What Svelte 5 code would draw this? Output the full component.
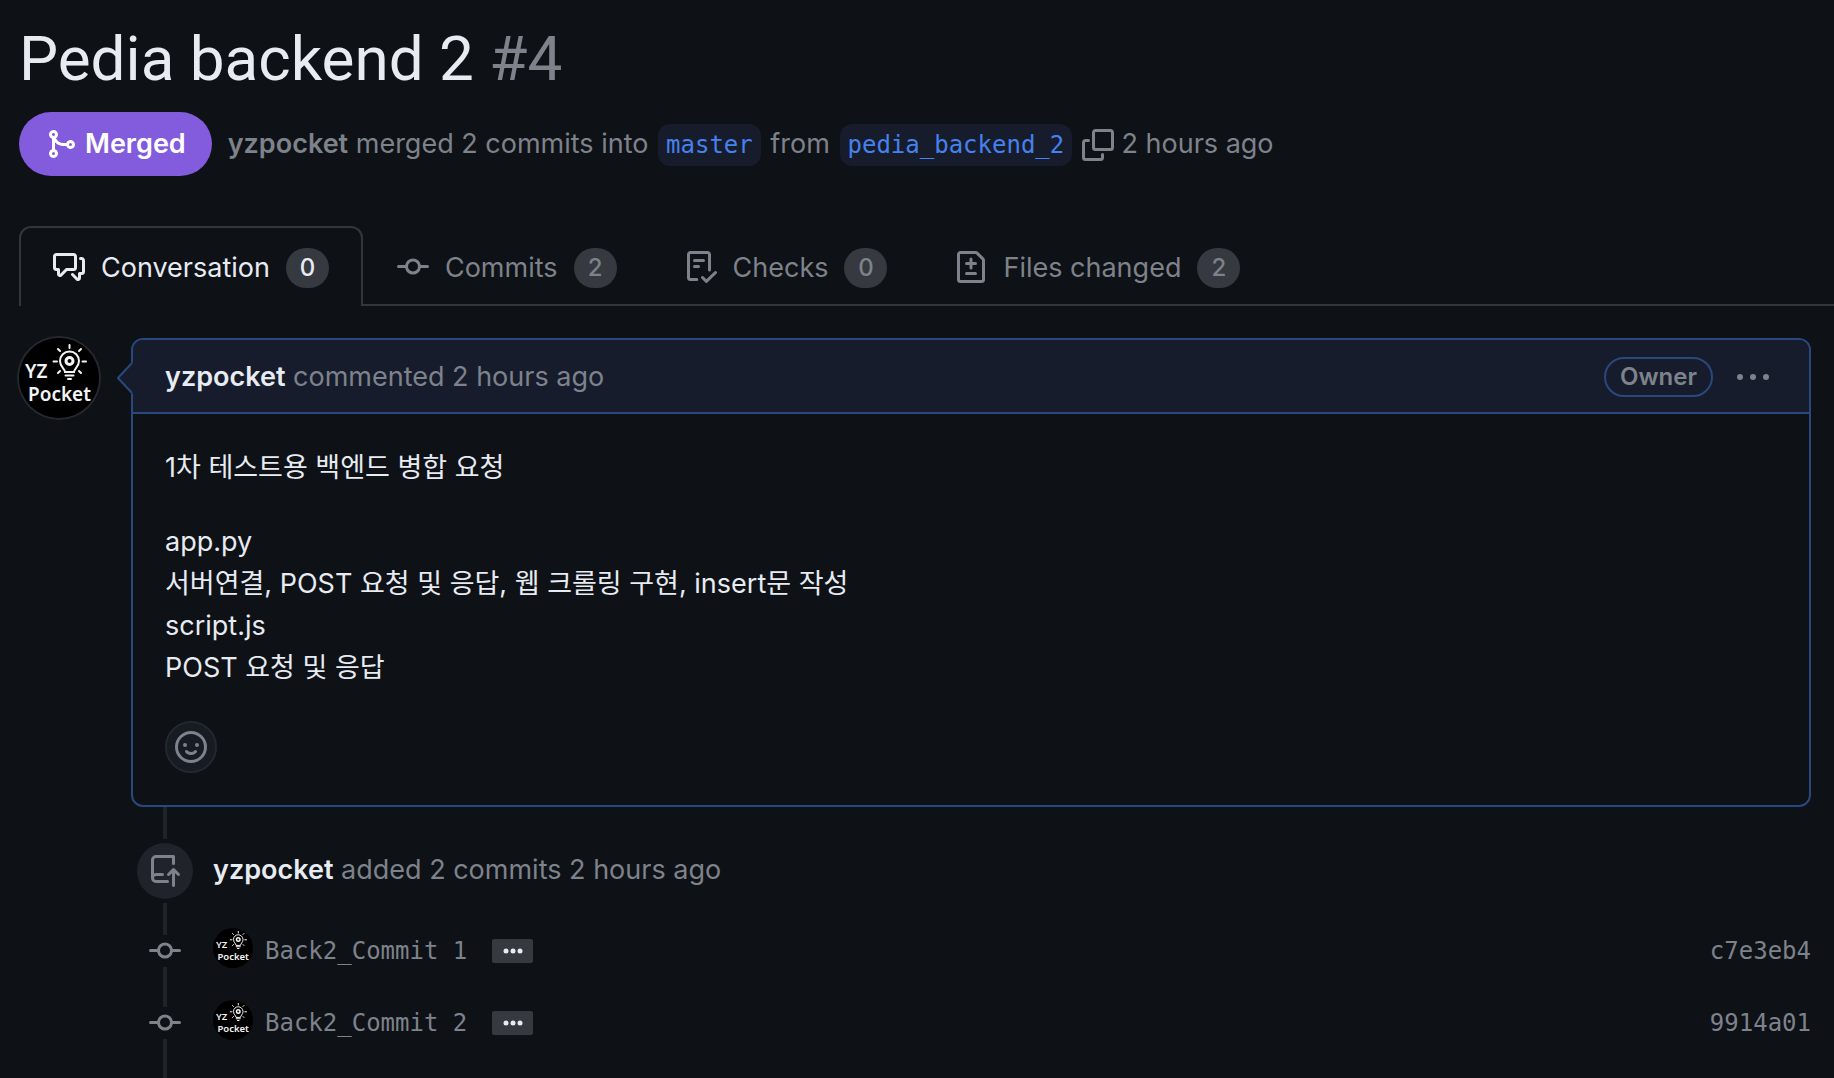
<script lang="ts">
	const icons = {
		merge:
			'M5.45 5.154A4.25 4.25 0 0 0 9.25 7.5h1.378a2.251 2.251 0 1 1 0 1.5H9.25A5.734 5.734 0 0 1 5 7.123v3.505a2.25 2.25 0 1 1-1.5 0V5.372a2.25 2.25 0 1 1 1.95-.218ZM4.25 13.5a.75.75 0 1 0 0-1.5.75.75 0 0 0 0 1.5Zm8.5-4.5a.75.75 0 1 0 0-1.5.75.75 0 0 0 0 1.5ZM5 3.25a.75.75 0 1 0 0 .005V3.25Z',
		copy: 'M0 6.75C0 5.784.784 5 1.75 5h1.5a.75.75 0 0 1 0 1.5h-1.5a.25.25 0 0 0-.25.25v7.5c0 .138.112.25.25.25h7.5a.25.25 0 0 0 .25-.25v-1.5a.75.75 0 0 1 1.5 0v1.5A1.75 1.75 0 0 1 9.25 16h-7.5A1.75 1.75 0 0 1 0 14.25Z M5 1.75C5 .784 5.784 0 6.75 0h7.5C15.216 0 16 .784 16 1.75v7.5A1.75 1.75 0 0 1 14.25 11h-7.5A1.75 1.75 0 0 1 5 9.25Zm1.75-.25a.25.25 0 0 0-.25.25v7.5c0 .138.112.25.25.25h7.5a.25.25 0 0 0 .25-.25v-7.5a.25.25 0 0 0-.25-.25Z',
		discussion:
			'M1.75 1h8.5c.966 0 1.75.784 1.75 1.75v5.5A1.75 1.75 0 0 1 10.25 10H7.061l-2.574 2.573A1.458 1.458 0 0 1 2 11.543V10h-.25A1.75 1.75 0 0 1 0 8.25v-5.5C0 1.784.784 1 1.75 1ZM1.5 2.75v5.5c0 .138.112.25.25.25h1a.75.75 0 0 1 .75.75v2.19l2.72-2.72a.749.749 0 0 1 .53-.22h3.5a.25.25 0 0 0 .25-.25v-5.5a.25.25 0 0 0-.25-.25h-8.5a.25.25 0 0 0-.25.25Zm13 2a.25.25 0 0 0-.25-.25h-.5a.75.75 0 0 1 0-1.5h.5c.966 0 1.75.784 1.75 1.75v5.5A1.75 1.75 0 0 1 14.25 12H14v1.543a1.458 1.458 0 0 1-2.487 1.03L9.22 12.28a.749.749 0 0 1 .326-1.275.749.749 0 0 1 .734.215l2.22 2.22v-2.19a.75.75 0 0 1 .75-.75h1a.25.25 0 0 0 .25-.25Z',
		commit:
			'M11.93 8.5a4.002 4.002 0 0 1-7.86 0H.75a.75.75 0 0 1 0-1.5h3.32a4.002 4.002 0 0 1 7.86 0h3.32a.75.75 0 0 1 0 1.5Zm-1.43-.75a2.5 2.5 0 1 0-5 0 2.5 2.5 0 0 0 5 0Z',
		checklist:
			'M2.5 1.75v11.5c0 .138.112.25.25.25h3.17a.75.75 0 0 1 0 1.5H2.75A1.75 1.75 0 0 1 1 13.25V1.75C1 .784 1.784 0 2.75 0h8.5C12.216 0 13 .784 13 1.75v7.736a.75.75 0 0 1-1.5 0V1.75a.25.25 0 0 0-.25-.25h-8.5a.25.25 0 0 0-.25.25Zm13.274 9.537v-.001l-4.557 4.45a.75.75 0 0 1-1.055-.008l-1.943-1.95a.75.75 0 0 1 1.062-1.058l1.419 1.425 4.026-3.932a.75.75 0 1 1 1.048 1.074ZM4.75 4h4.5a.75.75 0 0 1 0 1.5h-4.5a.75.75 0 0 1 0-1.5ZM4 7.75A.75.75 0 0 1 4.75 7h2a.75.75 0 0 1 0 1.5h-2A.75.75 0 0 1 4 7.75Z',
		diff: 'M1 1.75C1 .784 1.784 0 2.75 0h7.586c.464 0 .909.184 1.237.513l2.914 2.914c.329.328.513.773.513 1.237v9.586A1.75 1.75 0 0 1 13.25 16H2.75A1.75 1.75 0 0 1 1 14.25Zm1.75-.25a.25.25 0 0 0-.25.25v12.5c0 .138.112.25.25.25h10.5a.25.25 0 0 0 .25-.25V4.664a.25.25 0 0 0-.073-.177l-2.914-2.914a.25.25 0 0 0-.177-.073ZM8 3.25a.75.75 0 0 1 .75.75v1.5h1.5a.75.75 0 0 1 0 1.5h-1.5v1.5a.75.75 0 0 1-1.5 0V7h-1.5a.75.75 0 0 1 0-1.5h1.5V4A.75.75 0 0 1 8 3.25Zm-3 8a.75.75 0 0 1 .75-.75h4.5a.75.75 0 0 1 0 1.5h-4.5a.75.75 0 0 1-.75-.75Z',
		smiley:
			'M8 0a8 8 0 1 1 0 16A8 8 0 0 1 8 0ZM1.5 8a6.5 6.5 0 1 0 13 0 6.5 6.5 0 0 0-13 0Zm3.82 1.636a.75.75 0 0 1 1.038.175l.007.009c.103.118.22.222.35.31.264.178.683.37 1.285.37.602 0 1.02-.192 1.285-.371.13-.088.247-.192.35-.31l.007-.008a.75.75 0 0 1 1.222.87l-.022.031a2.066 2.066 0 0 1-.184.213c-.16.166-.338.316-.53.445-.63.418-1.37.638-2.127.629-.946 0-1.652-.308-2.126-.63a3.331 3.331 0 0 1-.715-.657l-.022-.031a.75.75 0 0 1 .183-1.044ZM12 7a1 1 0 1 1-2 0 1 1 0 0 1 2 0ZM5 8a1 1 0 1 1 0-2 1 1 0 0 1 0 2Z',
		push: 'M1 2.5A2.5 2.5 0 0 1 3.5 0h8.75a.75.75 0 0 1 .75.75v3.5a.75.75 0 0 1-1.5 0V1.5h-8a1 1 0 0 0-1 1v6.708A2.493 2.493 0 0 1 3.5 9h3.25a.75.75 0 0 1 0 1.5H3.5a1 1 0 0 0 0 2h5.75a.75.75 0 0 1 0 1.5H3.5A2.5 2.5 0 0 1 1 11.5Zm13.23 7.79h-.001l-1.224-1.224v6.184a.75.75 0 0 1-1.5 0V9.066L10.28 10.29a.75.75 0 0 1-1.06-1.061l2.505-2.504a.75.75 0 0 1 1.06 0L15.29 9.23a.751.751 0 0 1-.018 1.042.751.751 0 0 1-1.042.018Z'
	};

	const tabs = [
		{ id: 'conversation', label: 'Conversation', count: 0, icon: icons.discussion },
		{ id: 'commits', label: 'Commits', count: 2, icon: icons.commit },
		{ id: 'checks', label: 'Checks', count: 0, icon: icons.checklist },
		{ id: 'files', label: 'Files changed', count: 2, icon: icons.diff }
	];

	const commits = [
		{ message: 'Back2_Commit 1', sha: 'c7e3eb4' },
		{ message: 'Back2_Commit 2', sha: '9914a01' }
	];

	const headBranch = 'pedia_backend_2';

	let activeTab = $state('conversation');

	const copyBranch = async () => {
		try {
			await navigator.clipboard.writeText(headBranch);
		} catch (err) {
			console.error('Failed to copy:', err);
		}
	};
</script>

{#snippet icon(path: string)}
	<svg class="icon" viewBox="0 0 16 16" width="32" height="32" aria-hidden="true">
		<path d={path} fill="currentColor" />
	</svg>
{/snippet}

{#snippet avatar(size: number)}
	<svg class="avatar" viewBox="0 0 80 80" width={size} height={size} role="img" aria-label="yzpocket">
		<circle cx="40" cy="40" r="40" fill="#000" />
		<g fill="none" stroke="#f4f4f4" stroke-width="2" stroke-linecap="round">
			<path d="M50.500 7v3M39 11l2 2M62 11l-2 2M34.500 23.500h3.500M63.500 23.500h3.500M39 35l2-2M62 35l-2-2" />
			<path d="M46 34c0-3-5-5-5-11a9.500 9.500 0 0 1 19 0c0 6-5 8-5 11z" />
			<circle cx="50.500" cy="23" r="3.500" stroke-width="3" />
			<path d="M46.500 37.500h8M49 41h3" />
		</g>
		<text x="6" y="40">YZ</text>
		<text x="9" y="63">Pocket</text>
	</svg>
{/snippet}

<main>
	<header>
		<h1>Pedia backend 2 <span>#4</span></h1>
		<div class="meta">
			<span class="state">{@render icon(icons.merge)}Merged</span>
			<div class="summary">
				<a class="author" href="#yzpocket">yzpocket</a> merged 2 commits into
				<a class="branch" href="#master">master</a> from
				<a class="branch" href="#head">{headBranch}</a>
				<button class="copy" aria-label="Copy branch name" onclick={copyBranch}>
					{@render icon(icons.copy)}
				</button>
				<span>2 hours ago</span>
			</div>
		</div>
	</header>

	<nav>
		{#each tabs as tab}
			<a
				href="#{tab.id}"
				class="tab"
				class:active={activeTab === tab.id}
				onclick={() => (activeTab = tab.id)}
			>
				{@render icon(tab.icon)}
				<span>{tab.label}</span>
				<span class="counter">{tab.count}</span>
			</a>
		{/each}
	</nav>

	<div class="discussion">
		<a class="author-avatar" href="#yzpocket">{@render avatar(80)}</a>
		<div class="thread">
			<article class="comment">
				<svg class="pointer" viewBox="0 0 16 32" width="16" height="32" aria-hidden="true">
					<path d="M16 0 1 16l15 16z" fill="#161c2b" />
					<path d="M15 1 1 16l14 15" fill="none" stroke="#29487d" stroke-width="2" />
				</svg>
				<div class="comment-header">
					<div class="byline"><a href="#yzpocket">yzpocket</a> commented 2 hours ago</div>
					<span class="owner">Owner</span>
					<button class="menu" aria-label="Show options">
						<svg viewBox="0 0 32 8" width="32" height="8" aria-hidden="true">
							<circle cx="3" cy="4" r="3" />
							<circle cx="16" cy="4" r="3" />
							<circle cx="29" cy="4" r="3" />
						</svg>
					</button>
				</div>
				<div class="comment-body">
					<p>1차 테스트용 백엔드 병합 요청</p>
					<p>
						app.py<br />
						서버연결, POST 요청 및 응답, 웹 크롤링 구현, insert문 작성<br />
						script.js<br />
						POST 요청 및 응답
					</p>
					<button class="react" aria-label="Add reaction">{@render icon(icons.smiley)}</button>
				</div>
			</article>

			<div class="timeline">
				<div class="line"></div>
				<div class="event">
					<span class="badge">{@render icon(icons.push)}</span>
					<div class="event-text"><a href="#yzpocket">yzpocket</a> added 2 commits 2 hours ago</div>
				</div>
				<div class="line"></div>
				{#each commits as commit}
					<div class="commit">
						<span class="dot">{@render icon(icons.commit)}</span>
						<div class="commit-row">
							{@render avatar(40)}
							<a class="message" href="#{commit.sha}">{commit.message}</a>
							<button class="expand" aria-label="Show full message">
								<svg viewBox="0 0 20 6" width="20" height="6" aria-hidden="true">
									<circle cx="3" cy="3" r="2.500" />
									<circle cx="10" cy="3" r="2.500" />
									<circle cx="17" cy="3" r="2.500" />
								</svg>
							</button>
							<a class="sha" href="#{commit.sha}">{commit.sha}</a>
						</div>
					</div>
					<div class="line long"></div>
				{/each}
			</div>
		</div>
	</div>
</main>

<style>
	:global(body) {
		background: #0e1116;
	}

	main {
		box-sizing: border-box;
		height: 100vh;
		overflow: hidden;
		padding-top: 20px;
		color: #e7ebf2;
		font-family: Inter, 'Noto Sans CJK KR', sans-serif;
		font-size: 27px;
		line-height: 42px;
	}

	a {
		color: inherit;
		text-decoration: none;
	}

	button {
		padding: 0;
		border: 0;
		background: none;
		color: inherit;
		font: inherit;
		cursor: pointer;
	}

	svg {
		display: block;
		flex: none;
	}

	header {
		padding: 0 19px;
	}

	h1 {
		margin: 0 0 14px;
		font-family: Roboto, sans-serif;
		font-size: 62px;
		font-weight: 400;
		line-height: 78px;
	}

	h1 span {
		color: #7d828b;
	}

	.meta {
		display: flex;
		align-items: center;
		gap: 16px;
	}

	.state {
		display: flex;
		align-items: center;
		gap: 8px;
		height: 64px;
		padding: 0 26px;
		border-radius: 32px;
		background: #825cdc;
		color: #fff;
		font-weight: 600;
	}

	.summary {
		color: #7d828b;
	}

	.author {
		font-weight: 600;
	}

	.branch {
		display: inline-block;
		margin: 0 2px;
		padding: 0 8px;
		border-radius: 12px;
		background: #161c2b;
		color: #4681ed;
		font-family: 'DejaVu Sans Mono', monospace;
		font-size: 24px;
	}

	.copy {
		vertical-align: middle;
	}

	nav {
		display: flex;
		margin: 50px 0 0 19px;
		box-shadow: inset 0 -2px #33363c;
	}

	.tab {
		display: flex;
		align-items: center;
		gap: 16px;
		box-sizing: border-box;
		height: 80px;
		padding: 0 32px;
		border: 2px solid transparent;
		border-bottom: 0;
		color: #7d828b;
	}

	.tab.active {
		border-color: #33363c;
		border-radius: 12px 12px 0 0;
		background: #0e1116;
		color: #e7ebf2;
	}

	.tab span {
		margin-top: 2px;
	}

	.counter {
		box-sizing: border-box;
		min-width: 43px;
		height: 40px;
		padding: 0 12px;
		border-radius: 20px;
		background: #363940;
		font-size: 24px;
		font-weight: 500;
		line-height: 40px;
		text-align: center;
	}

	.discussion {
		display: flex;
		gap: 32px;
		margin-top: 32px;
		padding: 0 23px 0 19px;
	}

	.author-avatar {
		height: 80px;
		border-radius: 50%;
		box-shadow: 0 0 0 2px #26282d;
	}

	.avatar text {
		fill: #f4f4f4;
		font-family: 'Noto Sans', sans-serif;
		font-size: 19px;
		font-weight: 600;
	}

	.thread {
		flex: 1;
		min-width: 0;
	}

	.comment {
		position: relative;
		border: 2px solid #29487d;
		border-radius: 12px;
	}

	.pointer {
		position: absolute;
		top: 22px;
		left: -16px;
	}

	.comment-header {
		display: flex;
		align-items: center;
		box-sizing: border-box;
		height: 74px;
		padding: 2px 40px 0 32px;
		border-bottom: 2px solid #29487d;
		border-radius: 10px 10px 0 0;
		background: #161c2b;
		color: #7d828b;
	}

	.byline {
		flex: 1;
	}

	.byline a,
	.event-text a {
		color: #e7ebf2;
		font-weight: 600;
	}

	.owner {
		padding: 0 14px;
		border: 2px solid #29487d;
		border-radius: 20px;
		font-size: 24px;
		font-weight: 600;
		line-height: 36px;
	}

	.menu {
		margin-left: 24px;
	}

	.menu svg,
	.expand svg {
		fill: currentColor;
	}

	.comment-body {
		padding: 33px 32px 32px;
	}

	p {
		margin: 0 0 32px;
	}

	.react {
		display: flex;
		align-items: center;
		justify-content: center;
		box-sizing: border-box;
		width: 52px;
		height: 52px;
		border: 2px solid #24272c;
		border-radius: 50%;
		background: #171b22;
		color: #7d828b;
	}

	.timeline {
		padding-left: 6px;
		color: #7d828b;
	}

	.line {
		width: 4px;
		height: 32px;
		margin-left: 26px;
		background: #202328;
	}

	.line.long {
		height: 40px;
	}

	.event {
		display: flex;
		align-items: center;
		gap: 20px;
		height: 64px;
	}

	.event-text {
		padding-bottom: 2px;
	}

	.badge {
		display: flex;
		align-items: center;
		justify-content: center;
		width: 56px;
		height: 56px;
		border-radius: 50%;
		background: #202329;
	}

	.commit {
		display: flex;
		align-items: center;
		gap: 32px;
		height: 32px;
		padding-left: 12px;
	}

	.commit-row {
		display: flex;
		flex: 1;
		align-items: center;
		font-family: 'DejaVu Sans Mono', monospace;
		font-size: 24px;
	}

	.commit-row .avatar {
		margin-bottom: 6px;
	}

	.message {
		margin-left: 12px;
	}

	.expand {
		display: flex;
		align-items: center;
		justify-content: center;
		width: 41px;
		height: 24px;
		margin-left: 25px;
		border-radius: 2px;
		background: #363940;
		color: #e7ebf2;
	}

	.sha {
		margin-left: auto;
	}
</style>
